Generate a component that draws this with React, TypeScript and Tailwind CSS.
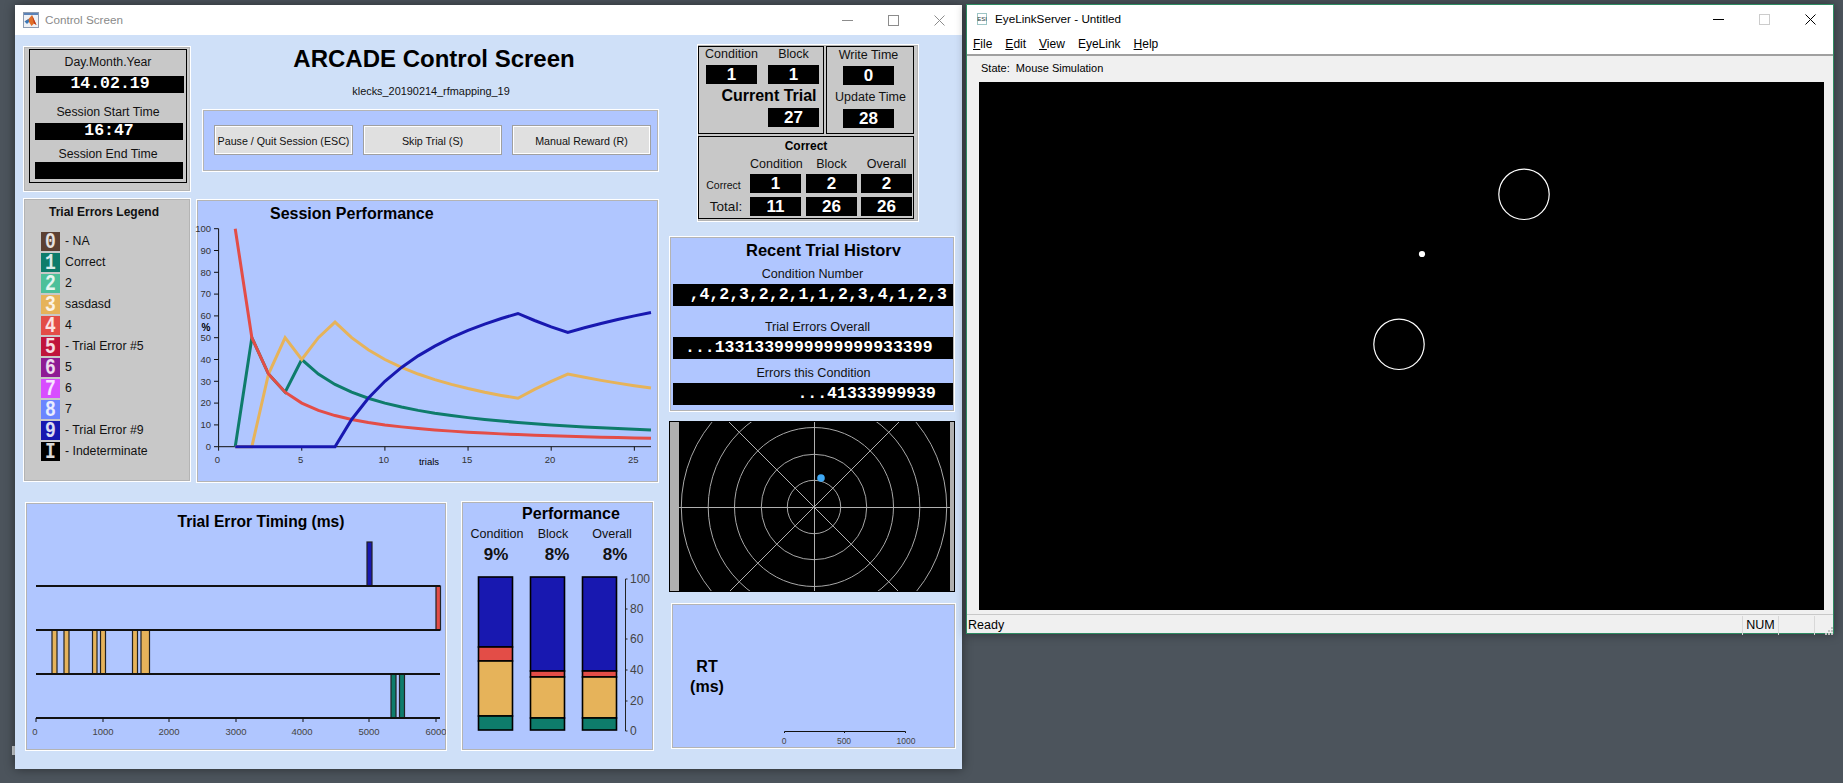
import type { ReactNode } from 'react';

const RED = '#e34d47';
const GREEN = '#0e7c6b';
const YELLOW = '#e6b35a';
const BLUE = '#1818b0';

const legendItems = [
  { key: '0', label: '- NA', swatch: 'bg-[#5c4033]' },
  { key: '1', label: 'Correct', swatch: 'bg-[#0e7c6b]' },
  { key: '2', label: '2', swatch: 'bg-[#4cc09a]' },
  { key: '3', label: 'sasdasd', swatch: 'bg-[#e6b35a]' },
  { key: '4', label: '4', swatch: 'bg-[#e34d47]' },
  { key: '5', label: '- Trial Error #5', swatch: 'bg-[#c0143c]' },
  { key: '6', label: '5', swatch: 'bg-[#8e1a94]' },
  { key: '7', label: '6', swatch: 'bg-[#d84dff]' },
  { key: '8', label: '7', swatch: 'bg-[#6b85ff]' },
  { key: '9', label: '- Trial Error #9', swatch: 'bg-[#1818b0]' },
  { key: 'I', label: '- Indeterminate', swatch: 'bg-black' },
];

// trial-by-trial percentages behind the session chart
const trials = Array.from({ length: 26 }, (_, i) => i + 1);
const redPct = (n: number) => 100 / n;
const greenPct = (n: number) => (n < 2 ? 0 : n < 5 ? 100 / n : 200 / n);
const yellowPct = (n: number) => {
  if (n < 3) return 0;
  if (n === 3) return 100 / 3;
  if (n === 4) return 50;
  if (n === 5) return 40;
  if (n === 6) return 50;
  if (n === 7) return 400 / 7;
  if (n <= 18) return 400 / n;
  if (n <= 21) return ((n - 14) / n) * 100;
  return (700 / n);
};
const bluePct = (n: number) => {
  if (n <= 7) return 0;
  if (n <= 18) return ((n - 7) / n) * 100;
  if (n <= 21) return (11 / n) * 100;
  return ((n - 10) / n) * 100;
};
const linePoints = (fn: (n: number) => number) =>
  trials.map((n) => `${218.6 + n * 16.63},${446.7 - fn(n) * 2.18}`).join(' ');

function Panel({ className, children }: { className: string; children?: ReactNode }) {
  return (
    <div className={`box-border border border-white shadow-[inset_0_0_0_1px_#b4b4b4] ${className}`}>
      {children}
    </div>
  );
}

function MonoDisplay({ className, children }: { className: string; children?: ReactNode }) {
  return (
    <div className={`bg-black text-white font-['Liberation_Mono',monospace] font-bold text-[16.5px] leading-none flex items-center whitespace-nowrap ${className}`}>
      {children}
    </div>
  );
}

function NumberBox({ value, className = '' }: { value: string; className?: string }) {
  return (
    <div className={`w-[51px] h-[19px] bg-black text-white font-bold text-[17px] leading-none flex items-center justify-center ${className}`}>
      {value}
    </div>
  );
}

function WindowGlyphs({ active }: { active: boolean }) {
  const stroke = active ? '#000000' : '#8c8c8c';
  return (
    <div className="ml-auto flex h-full">
      <div className="w-[46px] flex items-center justify-center">
        <svg width="11" height="11" viewBox="0 0 11 11"><path d="M0 5.5H11" stroke={stroke} fill="none" /></svg>
      </div>
      <div className="w-[46px] flex items-center justify-center">
        <svg width="11" height="11" viewBox="0 0 11 11"><rect x="0.5" y="0.5" width="10" height="10" stroke={active ? '#cccccc' : '#8c8c8c'} fill="none" /></svg>
      </div>
      <div className="w-[46px] flex items-center justify-center">
        <svg width="11" height="11" viewBox="0 0 11 11"><path d="M0.5 0.5L10.5 10.5M10.5 0.5L0.5 10.5" stroke={stroke} fill="none" /></svg>
      </div>
    </div>
  );
}

function MatlabIcon() {
  return (
    <svg width="16" height="16" viewBox="0 0 16 16" className="shrink-0">
      <rect x="0.5" y="0.5" width="15" height="15" fill="#eef1f6" stroke="#8e9bb0" />
      <rect x="1" y="1" width="14" height="2" fill="#5b83b8" />
      <path d="M1.5 9.5L5.5 7L9 3L13.5 13L11 11.5L8.5 14L6 10Z" fill="#e0702a" />
      <path d="M1.5 9.5L5.5 7L6 10L4 12Z" fill="#3a78b8" />
      <path d="M9 3L13.5 13L11 11.5Z" fill="#c23a1a" />
    </svg>
  );
}

function EyeLinkIcon() {
  return (
    <svg width="10" height="12" viewBox="0 0 10 12" className="shrink-0">
      <rect x="0.5" y="0.5" width="9" height="11" fill="none" stroke="#3a8a8a" strokeDasharray="1 1" />
      <text x="5" y="8" textAnchor="middle" fontSize="6" fill="#1a3a3a">ESI</text>
    </svg>
  );
}

function SessionChart() {
  const yTicks = [0, 10, 20, 30, 40, 50, 60, 70, 80, 90, 100];
  const xTicks = [0, 5, 10, 15, 20, 25];
  return (
    <svg viewBox="197 227 461 255" className="w-[461px] h-[255px] block overflow-visible font-['Liberation_Sans',sans-serif]">
      <path d="M218.6 228.7V446.7H651" stroke="#111" fill="none" />
      {yTicks.map((t) => (
        <g key={t}>
          <path d={`M214 ${446.7 - t * 2.18}H218.6`} stroke="#111" />
          <text x="211" y={450 - t * 2.18} textAnchor="end" fontSize="9.5" fill="#333">{t}</text>
        </g>
      ))}
      {xTicks.map((t) => (
        <g key={t}>
          <path d={`M${218.6 + t * 16.63} 446.7v4`} stroke="#111" />
          <text x={217.5 + t * 16.63} y="463" textAnchor="middle" fontSize="9.5" fill="#333">{t}</text>
        </g>
      ))}
      <text x="206" y="331" textAnchor="middle" fontSize="10" fontWeight="700" fill="#000">%</text>
      <text x="429" y="465" textAnchor="middle" fontSize="9.5" fill="#000">trials</text>
      <polyline points={linePoints(greenPct)} fill="none" stroke={GREEN} strokeWidth="3" />
      <polyline points={linePoints(yellowPct)} fill="none" stroke={YELLOW} strokeWidth="3" />
      <polyline points={linePoints(redPct)} fill="none" stroke={RED} strokeWidth="3" />
      <polyline points={linePoints(bluePct)} fill="none" stroke={BLUE} strokeWidth="3" />
    </svg>
  );
}

function TimingChart() {
  const rows = [586, 630, 674, 718];
  const bars = [
    { x: 367, w: 5, y: 542, h: 44, fill: BLUE },
    { x: 436, w: 4.5, y: 586, h: 44, fill: RED },
    { x: 52, w: 5, y: 630, h: 44, fill: YELLOW },
    { x: 64, w: 5, y: 630, h: 44, fill: YELLOW },
    { x: 92.5, w: 4.5, y: 630, h: 44, fill: YELLOW },
    { x: 100.5, w: 5, y: 630, h: 44, fill: YELLOW },
    { x: 132.5, w: 5, y: 630, h: 44, fill: YELLOW },
    { x: 141, w: 8.5, y: 630, h: 44, fill: YELLOW },
    { x: 391, w: 5, y: 674, h: 44, fill: GREEN },
    { x: 399.5, w: 5, y: 674, h: 44, fill: GREEN },
  ];
  const labels = [
    { t: '0', x: 35 },
    { t: '1000', x: 103 },
    { t: '2000', x: 169 },
    { t: '3000', x: 236 },
    { t: '4000', x: 302 },
    { t: '5000', x: 369 },
    { t: '6000', x: 436 },
  ];
  return (
    <svg viewBox="26 541 420 209" className="w-[420px] h-[209px] block font-['Liberation_Sans',sans-serif]">
      {bars.map((b) => (
        <rect key={`${b.x}-${b.y}`} x={b.x} y={b.y} width={b.w} height={b.h} fill={b.fill} stroke="#222" strokeWidth="1.2" />
      ))}
      {rows.map((y) => (
        <path key={y} d={`M36 ${y}H440`} stroke="#111" strokeWidth="2" />
      ))}
      {[36, 103, 169, 236, 303, 369, 436].map((x) => (
        <path key={x} d={`M${x} 718v4`} stroke="#111" />
      ))}
      {labels.map((l) => (
        <text key={l.t} x={l.x} y="735" textAnchor="middle" fontSize="9.5" fill="#444">{l.t}</text>
      ))}
    </svg>
  );
}

function StackBars() {
  const stacks = [
    { x: 478.5, w: 34, cuts: [577, 647, 661, 716, 730] },
    { x: 530.5, w: 34, cuts: [577, 671, 677, 718, 730] },
    { x: 582.5, w: 34, cuts: [577, 671, 677, 718, 730] },
  ];
  const fills = [BLUE, RED, YELLOW, GREEN];
  const ticks = [
    { t: '100', y: 579 },
    { t: '80', y: 609 },
    { t: '60', y: 639 },
    { t: '40', y: 670 },
    { t: '20', y: 701 },
    { t: '0', y: 731 },
  ];
  return (
    <svg viewBox="462 564 191 186" className="w-[191px] h-[186px] block font-['Liberation_Sans',sans-serif]">
      {stacks.map((s) => (
        <g key={s.x}>
          {fills.map((fill, i) => (
            <rect key={fill} x={s.x} y={s.cuts[i]} width={s.w} height={s.cuts[i + 1] - s.cuts[i]} fill={fill} stroke="#000" strokeWidth="1.6" />
          ))}
        </g>
      ))}
      <path d="M625.5 579V731" stroke="#222" />
      {ticks.map((t) => (
        <g key={t.t}>
          <path d={`M625.5 ${t.y}h2`} stroke="#222" />
          <text x="630" y={t.y + 4} fontSize="12" fill="#444">{t.t}</text>
        </g>
      ))}
    </svg>
  );
}

function PolarPlot() {
  return (
    <svg viewBox="680 422 271 169" className="w-[271px] h-[169px] block bg-black">
      {[26.7, 52.7, 79.5, 105.8, 132.7].map((r) => (
        <circle key={r} cx="815" cy="507" r={r} fill="none" stroke="#a8a8a8" strokeWidth="1" />
      ))}
      <path d="M680 507.5H951M815.5 422V591M715 407L915 607M915 407L715 607" stroke="#b0b0b0" strokeWidth="1" />
      <circle cx="822" cy="478" r="3.8" fill="#3fa9f5" />
    </svg>
  );
}

function ControlScreen() {
  return (
    <div className="absolute left-[15px] top-[5px] w-[947px] h-[764px] flex flex-col shadow-[0_0_10px_rgba(0,0,0,0.45)]">
      <div className="h-[30px] bg-white flex items-center pl-[8px] shrink-0">
        <MatlabIcon />
        <span className="ml-[6px] text-[11.7px] text-[#8a8a8a]">Control Screen</span>
        <WindowGlyphs active={false} />
      </div>

      <div className="flex-1 bg-[#cfe0f8] flex pt-[9px] pl-[8px]">
        <div className="w-[636px]">
          <div className="flex h-[439px]">
            {/* Dates and legend */}
            <div className="w-[168px] mt-[2px]">
              <Panel className="h-[146px] bg-[#c8c8c8] pt-[2px] pl-[5px]">
                <div className="box-border w-[158px] h-[134px] border border-black flex flex-col text-[12.3px] text-[#111]">
                  <div className="h-[25px] flex items-center justify-center">Day.Month.Year</div>
                  <MonoDisplay className="mt-[1px] ml-[6px] w-[148px] h-[17px] justify-center">14.02.19</MonoDisplay>
                  <div className="h-[30px] pt-[8px] flex items-center justify-center">Session Start Time</div>
                  <MonoDisplay className="ml-[5px] w-[148px] h-[17px] justify-center">16:47</MonoDisplay>
                  <div className="h-[22px] pt-[6px] flex items-center justify-center">Session End Time</div>
                  <MonoDisplay className="ml-[5px] w-[148px] h-[17px]" />
                </div>
              </Panel>
              <Panel className="mt-[6px] h-[284px] bg-[#c8c8c8] pt-[5px] pl-[17px]">
                <div className="h-[16px] w-[126px] flex items-center justify-center text-[12px] font-bold text-[#111] whitespace-nowrap">Trial Errors Legend</div>
                <div className="mt-[12px] flex flex-col gap-[2px]">
                  {legendItems.map((item) => (
                    <div key={item.key} className="flex items-center h-[19px]">
                      <div className={`w-[19px] h-[19px] flex items-center justify-center font-['Liberation_Mono',monospace] font-bold text-[18px] leading-none text-white/85 ${item.swatch}`}>
                        <span className="inline-block scale-y-[1.25]">{item.key}</span>
                      </div>
                      <span className="ml-[5px] text-[12.3px] text-[#111]">{item.label}</span>
                    </div>
                  ))}
                </div>
              </Panel>
            </div>

            {/* Title, buttons, session chart */}
            <div className="ml-[5px] w-[463px]">
              <div className="h-[30px] pl-[13px] flex items-center justify-center text-[24px] leading-none font-bold text-black whitespace-nowrap">ARCADE Control Screen</div>
              <div className="h-[35px] pl-[7px] flex items-center justify-center text-[10.9px] text-[#111]">klecks_20190214_rfmapping_19</div>
              <Panel className="ml-[6px] w-[457px] h-[63px] bg-[#b0c6ff] pl-[11px] pt-[15px] flex gap-[10px] text-[10.7px] text-[#111] whitespace-nowrap">
                {['Pause / Quit Session (ESC)', 'Skip Trial (S)', 'Manual Reward (R)'].map((label) => (
                  <button key={label} className="box-border w-[139px] h-[30px] pt-[2px] border border-[#a0a0a0] bg-[#e0e0e0] shadow-[inset_0_0_0_1px_#ffffff] flex items-center justify-center">
                    {label}
                  </button>
                ))}
              </Panel>
              <Panel className="mt-[27px] w-[463px] h-[284px] bg-[#b0c6ff]">
                <div className="h-[27px] flex items-center">
                  <span className="ml-[73px] text-[16px] font-bold text-black whitespace-nowrap">Session Performance</span>
                </div>
                <SessionChart />
              </Panel>
            </div>
          </div>

          <div className="mt-[18px] flex items-start">
            <Panel className="mt-[1px] ml-[2px] w-[422px] h-[249px] bg-[#b0c6ff]">
              <div className="h-[38px] pl-[50px] flex items-center justify-center text-[15.6px] font-bold text-black">Trial Error Timing (ms)</div>
              <TimingChart />
            </Panel>
            <Panel className="ml-[14px] w-[193px] h-[250px] bg-[#b0c6ff]">
              <div className="h-[23px] pl-[27px] flex items-center justify-center text-[16px] font-bold text-black">Performance</div>
              <div className="h-[16px] ml-[7px] flex text-[12.5px] text-[#111]">
                <div className="w-[56px] text-center">Condition</div>
                <div className="w-[56px] text-center">Block</div>
                <div className="w-[62px] text-center">Overall</div>
              </div>
              <div className="mt-[4px] h-[19px] ml-[6px] flex text-[17px] leading-[19px] font-bold text-[#111]">
                <div className="w-[56px] text-center">9%</div>
                <div className="w-[66px] text-center">8%</div>
                <div className="w-[50px] text-center">8%</div>
              </div>
              <StackBars />
            </Panel>
          </div>
        </div>

        <div className="ml-[10px] w-[287px]">
          {/* Trial counters */}
          <Panel className="ml-[28px] w-[222px] h-[178px] bg-[#c8c8c8] pt-[1px] text-[12.5px] text-[#111]">
            <div className="flex gap-[2px]">
              <div className="box-border w-[126px] h-[88px] border border-black pl-[7px] grid grid-cols-[51px_51px] gap-x-[11px] content-start">
                <div className="h-[18px] pb-[3px] flex items-center justify-center">Condition</div>
                <div className="h-[18px] pb-[3px] flex items-center justify-center">Block</div>
                <NumberBox value="1" />
                <NumberBox value="1" />
                <div className="col-span-2 h-[24px] pl-[13px] flex items-center justify-center text-[16px] font-bold text-black">Current Trial</div>
                <div />
                <NumberBox value="27" />
              </div>
              <div className="box-border w-[88px] h-[88px] border border-black pl-[16px] flex flex-col">
                <div className="w-[51px] h-[19px] pb-[3px] flex items-center justify-center whitespace-nowrap">Write Time</div>
                <NumberBox value="0" className="h-[18px]" />
                <div className="w-[55px] h-[24px] flex items-center justify-center whitespace-nowrap">Update Time</div>
                <NumberBox value="28" />
              </div>
            </div>
            <div className="box-border mt-[2px] w-[216px] h-[83px] border border-black">
              <div className="h-[18px] flex items-center justify-center text-[12px] font-bold text-black">Correct</div>
              <div className="h-[18px] flex items-center">
                <div className="w-[51px]" />
                <div className="w-[51px] text-center">Condition</div>
                <div className="w-[51px] ml-[5px] text-center">Block</div>
                <div className="w-[51px] ml-[4px] text-center">Overall</div>
              </div>
              <div className="flex items-center">
                <div className="w-[51px] text-center text-[10.5px] pt-[5px] pr-[2px]">Correct</div>
                <NumberBox value="1" />
                <NumberBox value="2" className="ml-[5px]" />
                <NumberBox value="2" className="ml-[4px]" />
              </div>
              <div className="mt-[3px] flex items-center">
                <div className="w-[51px] text-center text-[13.5px] pl-[3px]">Total:</div>
                <NumberBox value="11" />
                <NumberBox value="26" className="ml-[5px]" />
                <NumberBox value="26" className="ml-[4px]" />
              </div>
            </div>
          </Panel>

          {/* Recent history */}
          <Panel className="mt-[14px] w-[286px] h-[176px] bg-[#b0c6ff] pl-[3px] text-[12.6px] text-[#111]">
            <div className="h-[19px] overflow-hidden pl-[20px] text-center text-[16.5px] leading-[26px] font-bold text-black">Recent Trial History</div>
            <div className="h-[28px] pt-[9px] pr-[2px] text-center leading-[18px]">Condition Number</div>
            <MonoDisplay className="w-[280px] h-[22px] justify-end pr-[6px]">,4,2,3,2,2,1,1,2,3,4,1,2,3</MonoDisplay>
            <div className="h-[31px] pt-[12px] pl-[8px] text-center leading-[18px]">Trial Errors Overall</div>
            <MonoDisplay className="w-[280px] h-[22px] pl-[12px]">...1331339999999999933399</MonoDisplay>
            <div className="h-[24px] pt-[5px] text-center leading-[18px]">Errors this Condition</div>
            <MonoDisplay className="w-[280px] h-[22px] justify-end pr-[17px]">...41333999939</MonoDisplay>
          </Panel>

          {/* Eye position plot */}
          <div className="mt-[9px] box-border w-[286px] h-[171px] border border-black flex bg-[#b0b0b0]">
            <div className="w-[9px]" />
            <PolarPlot />
          </div>

          {/* RT histogram */}
          <Panel className="mt-[11px] ml-[2px] w-[285px] h-[146px] bg-[#b0c6ff] flex">
            <div className="w-[70px] pt-[53px] text-center text-[16px] leading-[20px] font-bold text-black">
              RT
              <br />
              (ms)
            </div>
            <svg viewBox="742 604 213 144" className="w-[213px] h-[144px] block font-['Liberation_Sans',sans-serif]">
              <path d="M784.5 733V731.5H905.5V733M844.5 731.5V733" stroke="#111" fill="none" />
              <text x="784" y="744" textAnchor="middle" fontSize="8.5" fill="#444">0</text>
              <text x="844" y="744" textAnchor="middle" fontSize="8.5" fill="#444">500</text>
              <text x="906" y="744" textAnchor="middle" fontSize="8.5" fill="#444">1000</text>
            </svg>
          </Panel>
        </div>
      </div>
    </div>
  );
}

function EyeLinkServer() {
  const menus = [
    { head: 'F', rest: 'ile' },
    { head: 'E', rest: 'dit' },
    { head: 'V', rest: 'iew' },
    { head: '', rest: 'EyeLink' },
    { head: 'H', rest: 'elp' },
  ];
  return (
    <div className="absolute left-[966px] top-[4px] w-[868px] h-[630px] box-border border border-[#2e8b62] flex flex-col bg-[#f0f0f0] shadow-[0_0_10px_rgba(0,0,0,0.4)] text-black">
      <div className="h-[28px] bg-white flex items-center pl-[10px] shrink-0">
        <EyeLinkIcon />
        <span className="ml-[8px] text-[11.7px]">EyeLinkServer - Untitled</span>
        <WindowGlyphs active />
      </div>
      <div className="h-[21px] bg-white flex items-center gap-[13px] pl-[6px] text-[12px] shrink-0">
        {menus.map((m) => (
          <span key={m.rest}>
            <span className="underline">{m.head}</span>
            {m.rest}
          </span>
        ))}
      </div>
      <div className="h-[2px] bg-[#a0a0a0] shrink-0" />
      <div className="h-[26px] pl-[14px] pb-[2px] flex items-center text-[11px] whitespace-pre shrink-0">State:  Mouse Simulation</div>
      <div className="ml-[12px] w-[845px] h-[528px] bg-black shrink-0">
        <svg viewBox="979 82 845 528" className="w-[845px] h-[528px] block">
          <circle cx="1524" cy="194.3" r="25.2" fill="none" stroke="#fff" strokeWidth="1.2" />
          <circle cx="1399" cy="344.3" r="25.2" fill="none" stroke="#fff" strokeWidth="1.2" />
          <circle cx="1422" cy="254" r="3.1" fill="#fff" />
        </svg>
      </div>
      <div className="mt-[4px] h-[1px] bg-[#c8c8c8] shrink-0" />
      <div className="flex-1 flex items-center text-[12.5px] pl-[1px] pt-[1px]">
        <span>Ready</span>
        <div className="ml-auto h-full flex">
          <div className="w-[36px] border-l border-[#d8d8d8] flex items-center justify-center">NUM</div>
          <div className="w-[36px] border-l border-[#d8d8d8]" />
          <div className="w-[19px] border-l border-[#d8d8d8] flex items-end justify-end">
            <svg width="9" height="9" viewBox="0 0 9 9">
              <path d="M7 1h2v2h-2zM4 4h2v2h-2zM7 4h2v2h-2zM1 7h2v2h-2zM4 7h2v2h-2zM7 7h2v2h-2z" fill="#c0c0c0" />
            </svg>
          </div>
        </div>
      </div>
    </div>
  );
}

export default function App() {
  return (
    <div className="relative w-[1843px] h-[783px] overflow-hidden bg-[#4c545c] font-['Liberation_Sans',Arial,sans-serif]">
      <div className="absolute left-[12px] top-[746px] w-[3px] h-[9px] bg-[#cfd4d8]" />
      <ControlScreen />
      <EyeLinkServer />
    </div>
  );
}
